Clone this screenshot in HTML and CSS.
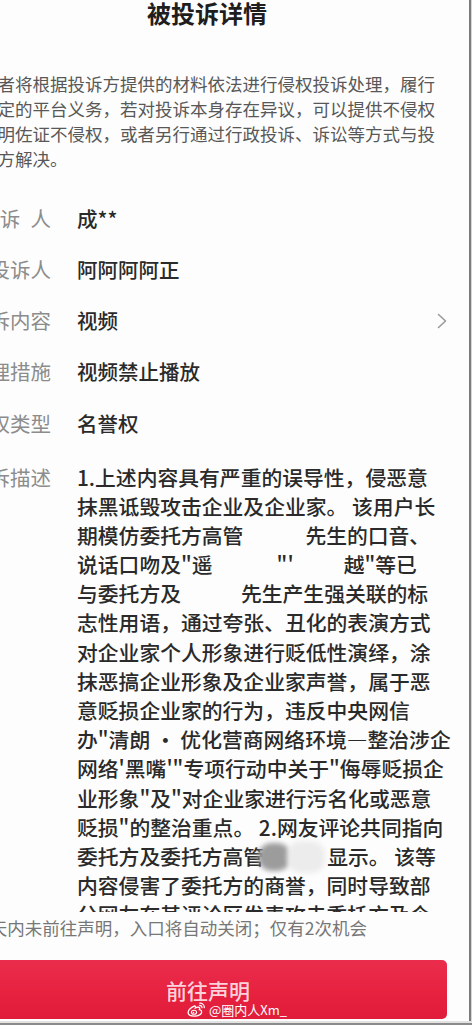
FILE: index.html
```html
<!DOCTYPE html>
<html lang="zh-CN">
<head>
<meta charset="utf-8">
<title>被投诉详情</title>
<link rel="stylesheet" href="styles.css">
</head>
<body>
<div class="frame">
  <div class="screen">
    <header class="title">被投诉详情</header>
    <main class="content">
      <p class="intro">读者将根据投诉方提供的材料依法进行侵权投诉处理，履行法定的平台义务，若对投诉本身存在异议，可以提供不侵权证明佐证不侵权，或者另行通过行政投诉、诉讼等方式与投诉方解决。</p>
      <dl class="rows">
        <div class="row"><dt class="label">投诉人</dt><dd class="value">成**</dd></div>
        <div class="row"><dt class="label">被投诉人</dt><dd class="value">阿阿阿阿正</dd></div>
        <div class="row"><dt class="label">投诉内容</dt><dd class="value">视频</dd>
          <svg class="chev" width="10" height="16" viewBox="0 0 10 16"><polyline points="1.5,1.5 8.5,8 1.5,14.5" fill="none" stroke="#9a9a9a" stroke-width="1.6" stroke-linecap="round" stroke-linejoin="round"/></svg>
        </div>
        <div class="row"><dt class="label">处理措施</dt><dd class="value">视频禁止播放</dd></div>
        <div class="row"><dt class="label">侵权类型</dt><dd class="value">名誉权</dd></div>
        <div class="row row-desc"><dt class="label">投诉描述</dt>
          <dd class="desc">
            <span class="ln">1.上述内容具有严重的误导性，侵恶意</span>
            <span class="ln">抹黑诋毁攻击企业及企业家。 该用户长</span>
            <span class="ln">期模仿委托方高管<span class="gap g1"></span>先生的口音、</span>
            <span class="ln">说话口吻及"遥<span class="gap g2"></span>"'<span class="gap g3"></span>越"等已</span>
            <span class="ln">与委托方及<span class="gap g4"></span>先生产生强关联的标</span>
            <span class="ln">志性用语，通过夸张、丑化的表演方式</span>
            <span class="ln">对企业家个人形象进行贬低性演绎，涂</span>
            <span class="ln">抹恶搞企业形象及企业家声誉，属于恶</span>
            <span class="ln">意贬损企业家的行为，违反中央网信</span>
            <span class="ln">办"清朗 · 优化营商网络环境—整治涉企</span>
            <span class="ln">网络'黑嘴'"专项行动中关于"侮辱贬损企</span>
            <span class="ln">业形象"及"对企业家进行污名化或恶意</span>
            <span class="ln">贬损"的整治重点。 2.网友评论共同指向</span>
            <span class="ln">委托方及委托方高管<span class="mask"><span class="blob dark"></span><span class="blob light"></span></span>显示。 该等</span>
            <span class="ln">内容侵害了委托方的商誉，同时导致部</span>
            <span class="ln">分网友在其评论区发表攻击委托方及企</span>
          </dd>
        </div>
      </dl>
    </main>
    <footer class="footer">
      <p class="hint">7天内未前往声明，入口将自动关闭；仅有2次机会</p>
      <button class="cta" type="button">前往声明
        <span class="watermark">
          <svg class="wb" width="19" height="15" viewBox="0 0 19 15"><path d="M7.5 4.2c-3.2 0.9-6.4 3.6-6.4 6.1 0 2.5 3 3.9 6.4 3.9 4 0 7.2-2 7.2-4.3 0-1.5-1.4-2.1-2.3-2.3 0.5-1 0.5-1.9-0.3-2.3-0.9-0.4-2.6 0.1-3.7 0.6 0.4-1.1 0.1-2-1-2z" fill="none" stroke="#fff" stroke-width="1.3"/><ellipse cx="7" cy="10.3" rx="2.6" ry="2" fill="none" stroke="#fff" stroke-width="1.1"/><circle cx="6.5" cy="10.6" r="0.8" fill="#fff"/><path d="M12.8 1.2c2.5 0 4.5 1.9 4.5 4.4" fill="none" stroke="#fff" stroke-width="1.3" stroke-linecap="round"/><path d="M12.6 3.4c1.3 0 2.4 1 2.4 2.3" fill="none" stroke="#fff" stroke-width="1.2" stroke-linecap="round"/></svg>
          <span class="wm-text">@圈内人Xm_</span>
        </span>
      </button>
    </footer>
  </div>
  <div class="edge"></div>
</div>
<div class="bottom-edge"></div>
</body>
</html>
```
FILE: styles.css
```css
html, body {
  margin: 0;
  padding: 0;
}
body {
  width: 472px;
  height: 1025px;
  overflow: hidden;
  background: #fcfcfc;
  font-family: "Noto Sans CJK SC", "Noto Sans", sans-serif;
}
.frame {
  display: flex;
  height: 1021px;
}
.screen {
  flex: 0 0 505px;
  margin-left: -36px;
  display: flex;
  flex-direction: column;
  height: 1021px;
  overflow: hidden;
  background: #fdfdfd;
}
.edge {
  flex: 0 0 3px;
  background: linear-gradient(to right, #7c7c7c 0, #7c7c7c 2px, #d8d8d8 2px);
}
.bottom-edge {
  height: 4px;
  background: linear-gradient(to bottom, #e2e2e2 0, #e2e2e2 2px, #8a8a8a 2px);
}
.title {
  margin: 0;
  padding-right: 19px;
  text-align: center;
  font-size: 24px;
  line-height: 26px;
  font-weight: 700;
  color: #1e1e1e;
}
.content {
  flex: 1;
  min-height: 0;
  overflow: hidden;
}
.intro {
  margin: 44.5px 0 0 16px;
  width: 460px;
  font-size: 17.5px;
  line-height: 25px;
  color: #585858;
}
.rows {
  margin: 22px 0 0 0;
  padding: 0 22px 0 5px;
}
.row {
  display: flex;
  align-items: center;
  height: 51.25px;
}
.label {
  flex: 0 0 82px;
  font-size: 20.5px;
  line-height: 51.25px;
  color: #8c8c8c;
  text-align: justify;
  text-align-last: justify;
  white-space: nowrap;
}
.value {
  flex: 1;
  margin: 0 0 0 26px;
  font-size: 20.5px;
  font-weight: 500;
  line-height: 51.25px;
  color: #2a2a2a;
  white-space: nowrap;
}
.chev {
  flex: 0 0 auto;
  display: block;
}
.row-desc {
  height: auto;
  align-items: flex-start;
  margin-top: 13.8px;
}
.row-desc .label {
  line-height: 29.2px;
}
.desc {
  flex: 1;
  margin: 0 0 0 26px;
  font-size: 20.8px;
  font-weight: 500;
  line-height: 29.2px;
  color: #2a2a2a;
}
.ln {
  display: block;
  white-space: nowrap;
  height: 29.2px;
}
.gap {
  display: inline-block;
  vertical-align: top;
  height: 29.2px;
}
.g1 { width: 62px; }
.g2 { width: 64px; }
.g3 { width: 50px; }
.g4 { width: 60px; }
.mask {
  display: inline-flex;
  vertical-align: top;
  width: 63px;
  height: 29.2px;
  align-items: center;
}
.blob {
  display: block;
  height: 28px;
  border-radius: 14px;
  filter: blur(2.5px);
}
.blob.dark {
  width: 33px;
  margin-left: -6px;
  background: #9c9c9c;
}
.blob.light {
  width: 38px;
  margin-left: -4px;
  height: 32px;
  background: #ececec;
}
.footer {
  flex: 0 0 109px;
  background: #fdfdfd;
  display: flex;
  flex-direction: column;
}
.hint {
  margin: 2.5px 0 0 16px;
  font-size: 17.5px;
  line-height: 25px;
  color: #777777;
  white-space: nowrap;
}
.cta {
  position: relative;
  margin: 20.5px 22px 0 5px;
  height: 59px;
  border: 0;
  border-radius: 5px;
  background: linear-gradient(to bottom, #ea2d4c, #e6213f 60%, #e01c3a);
  color: rgba(255, 230, 236, 0.92);
  font-family: "Noto Sans CJK SC", "Noto Sans", sans-serif;
  font-size: 21px;
  font-weight: 500;
  line-height: 56px;
  padding: 0;
  text-align: center;
}
.watermark {
  position: absolute;
  left: 218px;
  top: 42px;
  display: flex;
  align-items: center;
  gap: 3px;
  line-height: 15px;
}
.wb {
  display: block;
}
.wm-text {
  font-family: "Noto Sans CJK SC", "Noto Sans", sans-serif;
  font-size: 13px;
  font-weight: 400;
  color: #fff;
}
```
